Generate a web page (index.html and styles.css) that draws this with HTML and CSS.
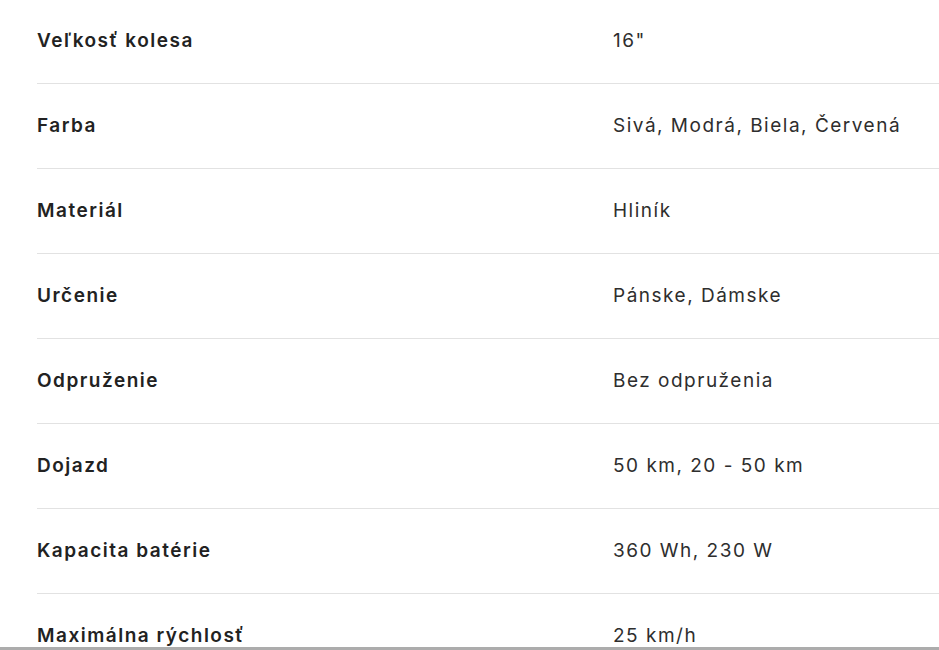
FILE: index.html
```html
<!DOCTYPE html>
<html lang="sk">
<head>
<meta charset="utf-8">
<link rel="stylesheet" href="styles.css">
</head>
<body>
<div class="panel">
  <dl class="specs">
    <div class="row"><dt>Veľkosť kolesa</dt><dd>16"</dd></div>
    <div class="row"><dt>Farba</dt><dd>Sivá, Modrá, Biela, Červená</dd></div>
    <div class="row"><dt>Materiál</dt><dd>Hliník</dd></div>
    <div class="row"><dt>Určenie</dt><dd>Pánske, Dámske</dd></div>
    <div class="row"><dt>Odpruženie</dt><dd>Bez odpruženia</dd></div>
    <div class="row"><dt>Dojazd</dt><dd>50 km, 20 - 50 km</dd></div>
    <div class="row"><dt>Kapacita batérie</dt><dd>360 Wh, 230 W</dd></div>
    <div class="row"><dt>Maximálna rýchlosť</dt><dd>25 km/h</dd></div>
  </dl>
</div>
</body>
</html>
```
FILE: styles.css
```css
html, body {
  margin: 0;
  padding: 0;
  background: #fff;
}
.panel {
  height: 650px;
  box-sizing: border-box;
  overflow: hidden;
  border-bottom: 3px solid #acacac;
}
.specs {
  margin: -1px 0 0 37px;
  padding: 0;
  font-family: Inter, "Open Sans", sans-serif;
  font-size: 19px;
  line-height: 24px;
  letter-spacing: 1.5px;
}
.row {
  display: grid;
  grid-template-columns: 576px 1fr;
  height: 84px;
  align-items: center;
  border-bottom: 1px solid #e2e2e2;
}
.row dt {
  font-weight: 600;
  color: #222;
}
.row dd {
  margin: 0;
  color: #2e2e2e;
}
```
